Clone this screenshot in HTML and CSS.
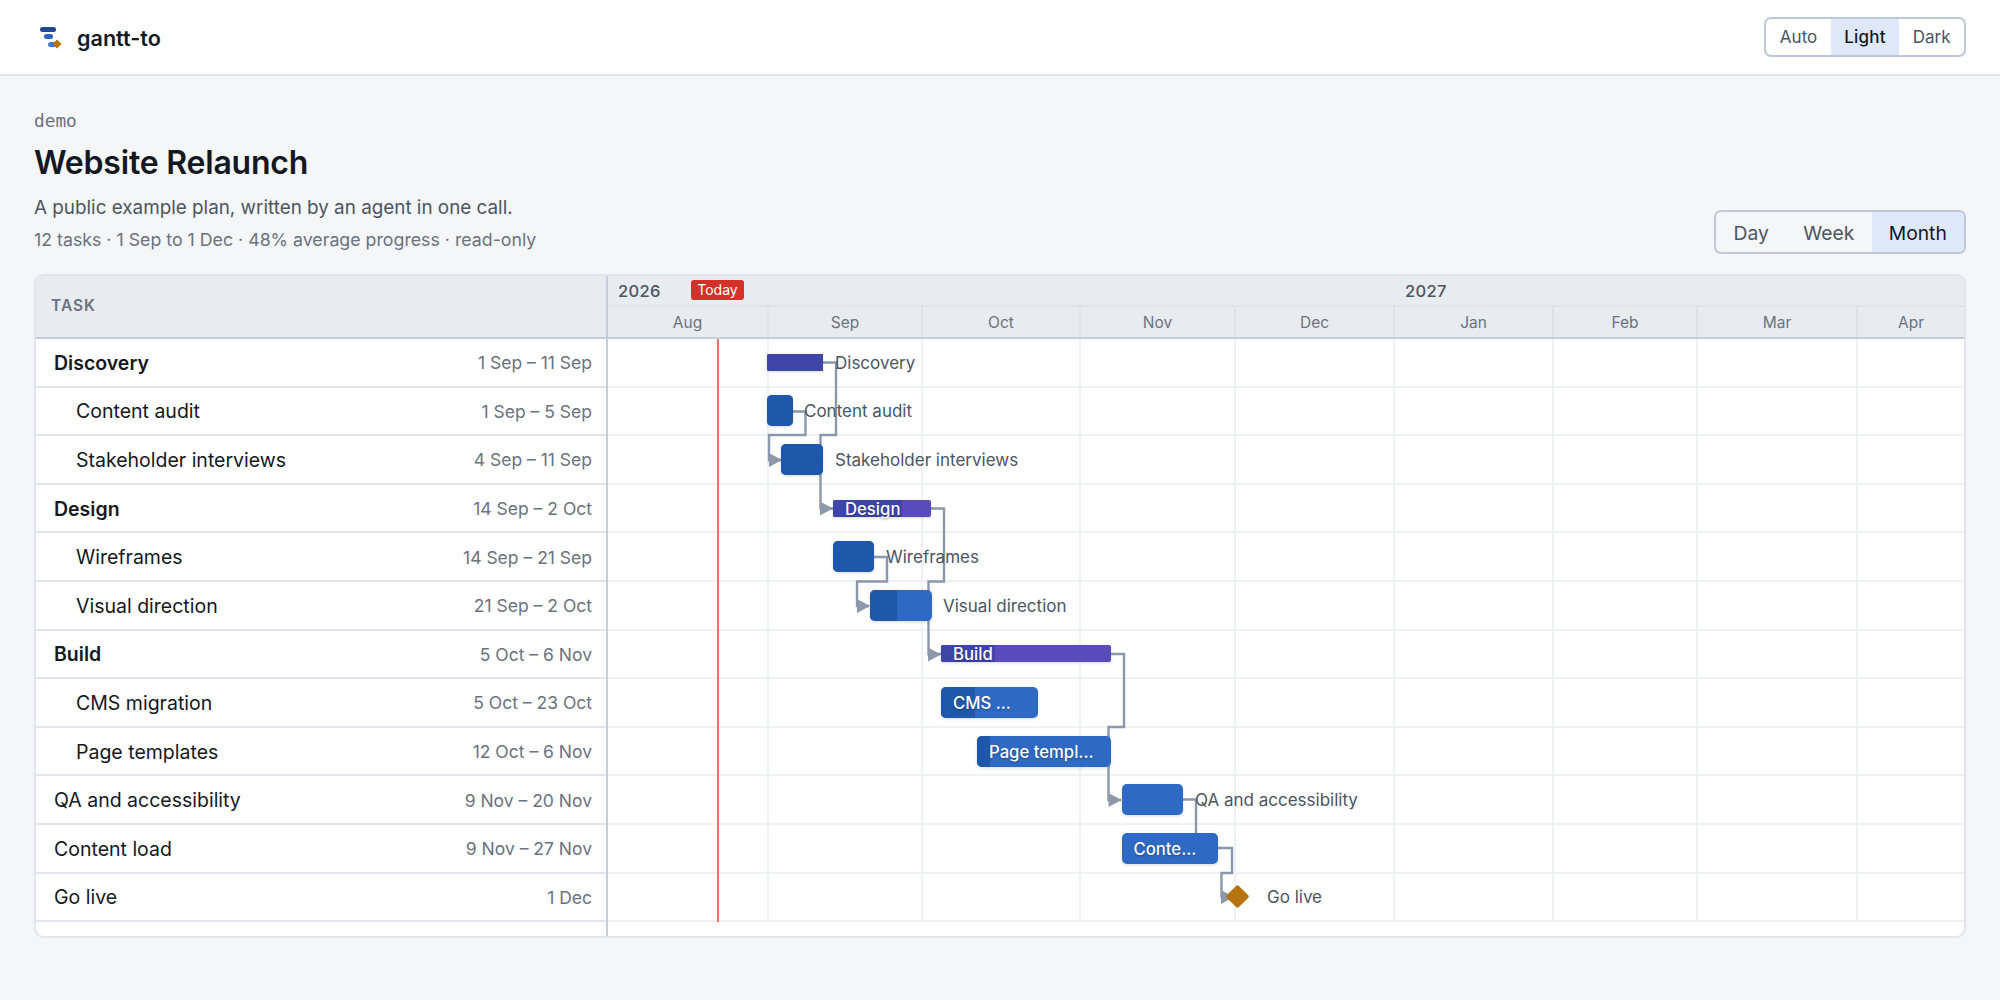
FILE: index.html
```html
<!DOCTYPE html>
<html lang="en">
<head>
  <meta charset="UTF-8" />
  <meta name="viewport" content="width=device-width, initial-scale=1" />
  <title>Website Relaunch - gantt-to</title>
  <link rel="stylesheet" href="styles.css">
</head>
<body>

  <!-- Top bar -->
  <header class="topbar">
    <div class="brand">
      <svg class="brand-logo" width="32" height="32" viewBox="0 0 32 32">
        <rect x="6" y="6" width="16" height="5" rx="2.5" fill="#1e4a94" />
        <rect x="10" y="13" width="9" height="5" rx="2.5" fill="#2a62c6" />
        <rect x="14" y="21" width="9" height="5" rx="2.5" fill="#3b7ae0" />
        <path d="M23 18.500l4.500 4.500-4.500 4.500-4.500-4.500z" fill="#b5740f" />
      </svg>
      <span>gantt-to</span>
    </div>
    <div class="seg seg-small">
      <button>Auto</button>
      <button class="on">Light</button>
      <button>Dark</button>
    </div>
  </header>

  <main class="page">
    <section class="intro">
      <div>
        <div class="eyebrow">demo</div>
        <h1>Website Relaunch</h1>
        <p class="desc">A public example plan, written by an agent in one call.</p>
        <p class="meta">12 tasks · 1 Sep to 1 Dec · 48% average progress · read-only</p>
      </div>
      <div class="seg seg-large">
        <button>Day</button>
        <button>Week</button>
        <button class="on">Month</button>
      </div>
    </section>

    <section class="gantt">
      <!-- Task list -->
      <div class="tasks">
        <div class="tasks-head">TASK</div>
        <div class="task group"><span class="name">Discovery</span><span class="dates">1 Sep – 11 Sep</span></div>
        <div class="task child"><span class="name">Content audit</span><span class="dates">1 Sep – 5 Sep</span></div>
        <div class="task child"><span class="name">Stakeholder interviews</span><span class="dates">4 Sep – 11 Sep</span></div>
        <div class="task group"><span class="name">Design</span><span class="dates">14 Sep – 2 Oct</span></div>
        <div class="task child"><span class="name">Wireframes</span><span class="dates">14 Sep – 21 Sep</span></div>
        <div class="task child"><span class="name">Visual direction</span><span class="dates">21 Sep – 2 Oct</span></div>
        <div class="task group"><span class="name">Build</span><span class="dates">5 Oct – 6 Nov</span></div>
        <div class="task child"><span class="name">CMS migration</span><span class="dates">5 Oct – 23 Oct</span></div>
        <div class="task child"><span class="name">Page templates</span><span class="dates">12 Oct – 6 Nov</span></div>
        <div class="task"><span class="name">QA and accessibility</span><span class="dates">9 Nov – 20 Nov</span></div>
        <div class="task"><span class="name">Content load</span><span class="dates">9 Nov – 27 Nov</span></div>
        <div class="task"><span class="name">Go live</span><span class="dates">1 Dec</span></div>
      </div>

      <!-- Timeline -->
      <div class="timeline">
        <div class="years">
          <div class="year" style="width:787px">2026</div>
          <div class="year">2027</div>
          <span class="today-badge">Today</span>
        </div>
        <div class="months">
          <div class="month" style="width:161px">Aug</div>
          <div class="month" style="width:154px">Sep</div>
          <div class="month" style="width:158px">Oct</div>
          <div class="month" style="width:155px">Nov</div>
          <div class="month" style="width:159px">Dec</div>
          <div class="month" style="width:159px">Jan</div>
          <div class="month" style="width:144px">Feb</div>
          <div class="month" style="width:160px">Mar</div>
          <div class="month" style="width:106px">Apr</div>
        </div>

        <div class="chart">
          <div class="cols">
            <div class="col" style="width:161px"></div>
            <div class="col" style="width:154px"></div>
            <div class="col" style="width:158px"></div>
            <div class="col" style="width:155px"></div>
            <div class="col" style="width:159px"></div>
            <div class="col" style="width:159px"></div>
            <div class="col" style="width:144px"></div>
            <div class="col" style="width:160px"></div>
          </div>
          <div class="today-line"></div>

          <!-- Dependencies, drawn in page coordinates -->
          <svg class="links" width="1356" height="583" viewBox="608 339 1356 583">
            <g fill="none" stroke="#8b97aa" stroke-width="2.400">
              <path d="M823 362.500H836V435H820.500V508.500H833" />
              <path d="M793 411.500H805.500V435H769V460H781" />
              <path d="M931 508.500H944V581.500H928.500V654H941" />
              <path d="M874 557H887V581.500H857V606H869" />
              <path d="M1111 654H1124V727H1108.500V800H1121" />
              <path d="M1183 799.500H1196V848" />
              <path d="M1218 848H1232V873H1221.500V896.500H1234" />
            </g>
            <g fill="#8d98aa">
              <path d="M820 501.500l13 7-13 7z" />
              <path d="M769 453l13 7-13 7z" />
              <path d="M928 647.500l13 7-13 7z" />
              <path d="M857 599l13 7-13 7z" />
              <path d="M1108.500 793l13 7-13 7z" />
              <path d="M1221 890l13 7-13 7z" />
            </g>
          </svg>

          <div class="row">
            <div class="bar summary" style="left:159px;width:56px"><i style="width:100%"></i></div>
            <span class="label" style="left:227px">Discovery</span>
          </div>
          <div class="row">
            <div class="bar" style="left:159px;width:26px"><i style="width:100%"></i></div>
            <span class="label" style="left:196px">Content audit</span>
          </div>
          <div class="row">
            <div class="bar" style="left:173px;width:42px"><i style="width:100%"></i></div>
            <span class="label" style="left:227px">Stakeholder interviews</span>
          </div>
          <div class="row">
            <div class="bar summary" style="left:225px;width:98px"><i style="width:70%"></i><b>Design</b></div>
          </div>
          <div class="row">
            <div class="bar" style="left:225px;width:41px"><i style="width:100%"></i></div>
            <span class="label" style="left:278px">Wireframes</span>
          </div>
          <div class="row">
            <div class="bar" style="left:261.500px;width:62px"><i style="width:44%"></i></div>
            <span class="label" style="left:335px">Visual direction</span>
          </div>
          <div class="row">
            <div class="bar summary" style="left:333px;width:170px"><i style="width:32%"></i><b>Build</b></div>
          </div>
          <div class="row">
            <div class="bar" style="left:333px;width:97px"><i style="width:35%"></i><b>CMS ...</b></div>
          </div>
          <div class="row">
            <div class="bar" style="left:369px;width:134px"><i style="width:10%"></i><b>Page templ...</b></div>
          </div>
          <div class="row">
            <div class="bar" style="left:513.500px;width:61.500px"></div>
            <span class="label" style="left:587px">QA and accessibility</span>
          </div>
          <div class="row">
            <div class="bar" style="left:513.500px;width:96.500px"><b>Conte...</b></div>
          </div>
          <div class="row">
            <div class="milestone" style="left:621px"></div>
            <span class="label" style="left:659px">Go live</span>
          </div>
        </div>
      </div>
    </section>
  </main>

</body>
</html>
```

FILE: styles.css
```css
* {
  margin: 0;
  padding: 0;
  box-sizing: border-box;
}

body {
  background: #f4f6f8;
  color: #14181f;
  font-family: Inter, "Noto Sans", sans-serif;
  height: 100vh;
  overflow: hidden;
}

button {
  font: inherit;
  color: inherit;
  background: none;
  border: 0;
}

/* Top bar */
.topbar {
  height: 76px;
  background: #fff;
  border-bottom: 2px solid #e1e5eb;
  padding: 0 34px;
  display: flex;
  align-items: center;
  justify-content: space-between;
}

.brand {
  display: flex;
  align-items: center;
  gap: 11px;
  font-size: 21.600px;
  font-weight: 600;
}

.brand span {
  margin-top: 1px;
}

.seg {
  display: flex;
  border: 2px solid #bdc9da;
  border-radius: 7px;
  overflow: hidden;
  color: #4b5563;
}

.seg .on {
  background: #dee8f9;
  color: #14181f;
}

.seg-small {
  height: 40px;
  font-size: 17px;
  background: #fff;
}

.seg-small button {
  padding: 0 13.500px;
}

.seg-small .on {
  font-weight: 500;
  letter-spacing: 0.2px;
}

.seg-large {
  height: 44px;
  margin-bottom: -2px;
  font-size: 19.300px;
}

.seg-large button {
  padding: 2px 17.200px 0;
}

/* Intro */
.page {
  padding: 34px 34px 0;
}

.intro {
  display: flex;
  align-items: flex-end;
  justify-content: space-between;
  margin-bottom: 22px;
}

.eyebrow {
  font-family: "DejaVu Sans Mono", monospace;
  font-size: 17.800px;
  line-height: 22px;
  color: #6b7280;
}

h1 {
  font-size: 32px;
  font-weight: 600;
  letter-spacing: -0.2px;
  line-height: 44px;
  margin-top: 9px;
}

.desc {
  font-size: 18.850px;
  line-height: 28px;
  color: #4b5563;
  margin-top: 9px;
}

.meta {
  font-size: 17.750px;
  line-height: 24px;
  color: #6b7280;
  margin-top: 6px;
}

/* Gantt */
.gantt {
  height: 664px;
  display: flex;
  background: #fff;
  border: 2px solid #e1e5eb;
  border-radius: 10px;
  overflow: hidden;
}

.tasks {
  width: 572px;
  flex-shrink: 0;
  border-right: 2px solid #c6cedb;
}

.tasks-head {
  height: 63px;
  padding: 0 0 2px 15px;
  display: flex;
  align-items: center;
  background: #e8ebf0;
  border-bottom: 2px solid #c6cedb;
  color: #6b7280;
  font-size: 15.500px;
  font-weight: 600;
  letter-spacing: 1px;
}

.task {
  height: 48.600px;
  padding: 1px 14px 0 18px;
  display: flex;
  align-items: center;
  justify-content: space-between;
  border-bottom: 2px solid #e1e5eb;
  font-size: 19.500px;
}

.task.child {
  padding-left: 40px;
}

.task.group .name {
  font-weight: 600;
}

.dates {
  font-size: 17.500px;
  color: #6b7280;
}

.timeline {
  flex: 1;
  min-width: 0;
}

.years {
  height: 31px;
  position: relative;
  display: flex;
  align-items: center;
  background: #e8ebf0;
  border-bottom: 2px solid #dde1e8;
}

.year {
  flex: none;
  padding-left: 10px;
  font-size: 16.500px;
  font-weight: 500;
  color: #4b5563;
  letter-spacing: 0.3px;
}

.today-badge {
  position: absolute;
  left: 83px;
  top: 4px;
  width: 53px;
  height: 20px;
  line-height: 20px;
  text-align: center;
  border-radius: 3px;
  background: #d3312a;
  color: #fff;
  font-size: 14px;
}

.months {
  height: 32px;
  display: flex;
  background: #e8ebf0;
  border-bottom: 2px solid #c6cedb;
}

.month {
  flex: none;
  display: flex;
  align-items: center;
  justify-content: center;
  border-right: 2px solid #dde1e8;
  color: #6b7280;
  font-size: 15.500px;
}

.month:last-child {
  border-right: 0;
}

.chart {
  position: relative;
}

.cols {
  position: absolute;
  top: 0;
  left: 0;
  height: 583px;
  display: flex;
}

.col {
  flex: none;
  border-right: 2px solid #eff1f5;
}

.today-line {
  position: absolute;
  top: 0;
  left: 109px;
  z-index: 1;
  width: 2px;
  height: 583px;
  background: #e8736d;
}

.links {
  position: absolute;
  top: 0;
  left: 0;
  z-index: 1;
}

.row {
  position: relative;
  height: 48.600px;
  display: flex;
  align-items: center;
  border-bottom: 2px solid #eff1f5;
}

.bar {
  position: absolute;
  height: 31px;
  z-index: 2;
  display: flex;
  align-items: center;
  border-radius: 5px;
  background: #2e69c4;
  box-shadow: 0 1px 3px rgba(20, 40, 80, 0.18);
}

.bar i {
  position: absolute;
  top: 0;
  left: 0;
  bottom: 0;
  border-radius: 5px 0 0 5px;
  background: #1f58aa;
}

.bar i[style="width:100%"] {
  border-radius: inherit;
}

.bar b {
  position: relative;
  padding: 1px 0 0 12px;
  color: #fff;
  font-size: 16.700px;
  font-weight: 500;
  white-space: nowrap;
  text-shadow: 0 1px 2px rgba(0, 0, 0, 0.3);
}

.bar.summary {
  height: 17px;
  border-radius: 2px;
  background: #5b4bba;
}

.bar.summary i {
  border-radius: 2px 0 0 2px;
  background: #3f44a8;
}

.label {
  position: absolute;
  z-index: 2;
  margin-top: 1px;
  color: #4b5563;
  font-size: 17px;
  white-space: nowrap;
}

.milestone {
  position: absolute;
  z-index: 2;
  width: 17px;
  height: 17px;
  border-radius: 2px;
  background: #b5740f;
  transform: rotate(45deg);
}
```
